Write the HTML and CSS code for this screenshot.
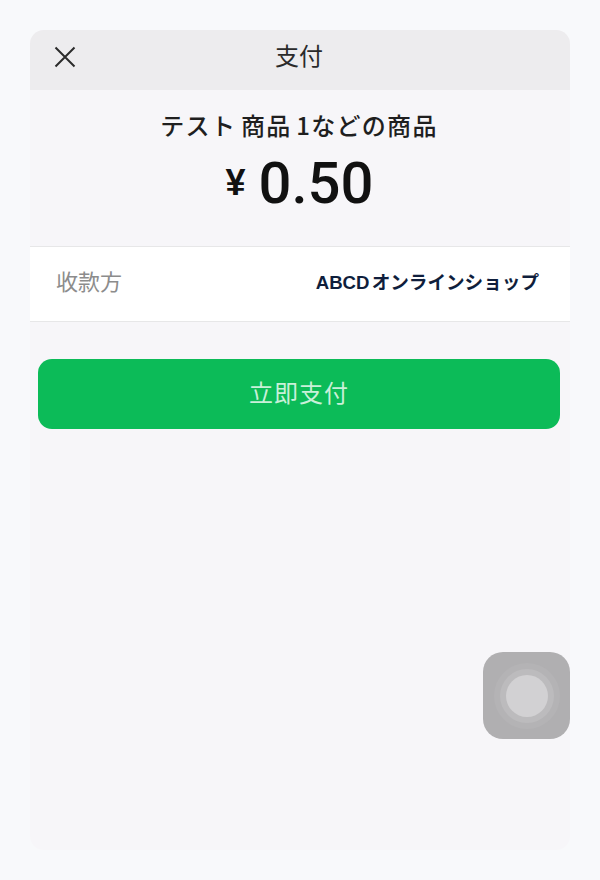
FILE: index.html
```html
<!DOCTYPE html>
<html lang="ja">
<head>
  <meta charset="UTF-8" />
  <title>支付</title>
  <link rel="stylesheet" href="styles.css">
</head>

<body>
  <div class="screen">
    <!-- nav bar -->
    <div class="nav-bar">
      <svg class="nav-close" width="22" height="22" viewBox="0 0 22 22" aria-label="Close">
        <path d="M1.5 1.5 L20.5 20.5 M20.5 1.5 L1.5 20.5" />
      </svg>
      <div class="nav-title">支付</div>
    </div>

    <!-- order summary -->
    <div class="summary">
      <div class="summary-name">テスト 商品 1などの商品</div>
      <div class="summary-price"><span class="currency">¥</span><span class="amount">0.50</span></div>
    </div>

    <div class="payee-row">
      <span class="payee-label">收款方</span>
      <span class="payee-name">ABCD オンラインショップ</span>
    </div>

    <button class="pay-btn">立即支付</button>

    <!-- floating touch button -->
    <div class="float-btn">
      <div class="float-ring-outer">
        <div class="float-ring">
          <div class="float-dot"></div>
        </div>
      </div>
    </div>
  </div>
</body>
</html>
```

FILE: styles.css
```css
body {
  margin: 0;
  background-color: #f8f9fb;
  font-family: "Liberation Sans", "Noto Sans CJK JP", sans-serif;
}

.screen {
  position: relative;
  width: 540px;
  height: 820px;
  margin: 30px 30px 0;
  background-color: #f7f6f9;
  border-radius: 14px;
  overflow: hidden;
}

/* nav bar */
.nav-bar {
  position: relative;
  display: flex;
  align-items: center;
  justify-content: center;
  height: 60px;
  background-color: #edecee;
}
.nav-close {
  position: absolute;
  left: 24px;
  top: 16px;
  fill: none;
  stroke: #2b2b2b;
  stroke-width: 2;
}
.nav-title {
  font-size: 24px;
  line-height: 24px;
  margin: 0 2px 6px 0;
  color: #2a2a2a;
}

/* summary */
.summary {
  display: flex;
  flex-direction: column;
  align-items: center;
  height: 156px;
  box-sizing: border-box;
  padding-top: 19px;
}
.summary-name {
  font-family: "Noto Sans CJK JP", sans-serif;
  font-size: 24px;
  line-height: 32px;
  font-weight: 500;
  color: #1f1f1f;
  letter-spacing: 1.3px;
  word-spacing: -2px;
  margin-right: 2px;
}
.summary-price {
  display: flex;
  align-items: baseline;
  margin-top: 9px;
  margin-right: 1px;
  color: #111;
}
.currency {
  font-size: 36px;
  font-weight: 700;
  margin-right: 13px;
  position: relative;
  top: -8px;
}
.amount {
  font-family: "Roboto", "Liberation Sans", sans-serif;
  font-size: 58px;
  line-height: 66px;
  font-weight: 500;
}

/* payee */
.payee-row {
  display: flex;
  align-items: center;
  justify-content: space-between;
  height: 66px;
  padding: 0 31px 8px 26px;
  background-color: #fff;
  border-top: 1px solid #e7e7e8;
  border-bottom: 1px solid #e7e7e8;
}
.payee-label {
  font-size: 22px;
  color: #8c8c8c;
}
.payee-name {
  font-size: 18.6px;
  font-weight: 700;
  color: #0f1e3c;
  word-spacing: -3px;
}

/* pay button */
.pay-btn {
  display: block;
  width: 522px;
  height: 70px;
  margin: 37px 0 0 8px;
  padding: 0 0 5px;
  background-color: #0cbb58;
  border: 0;
  border-radius: 14px;
  color: #c9f0d9;
  font-family: inherit;
  font-size: 24px;
  letter-spacing: 1px;
}

/* floating button */
.float-btn {
  position: absolute;
  right: 0;
  top: 622px;
  display: flex;
  align-items: center;
  justify-content: center;
  width: 87px;
  height: 87px;
  background-color: #b0afb1;
  border-radius: 20px;
}
.float-ring-outer {
  display: flex;
  align-items: center;
  justify-content: center;
  width: 66px;
  height: 66px;
  border-radius: 50%;
  background-color: #b4b3b5;
}
.float-ring {
  display: flex;
  align-items: center;
  justify-content: center;
  width: 54px;
  height: 54px;
  border-radius: 50%;
  background-color: #bcbbbd;
}
.float-dot {
  width: 42px;
  height: 42px;
  border-radius: 50%;
  background-color: #d2d1d3;
}
```
